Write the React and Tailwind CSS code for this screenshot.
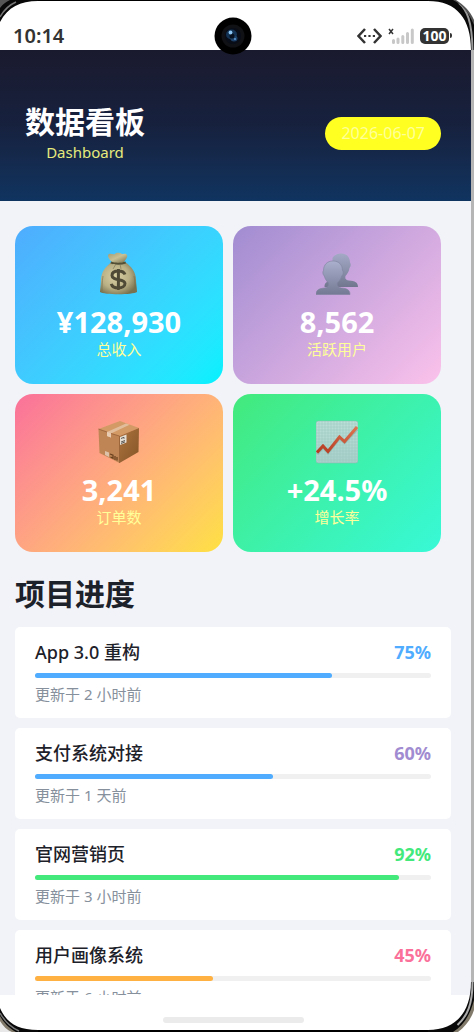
import React from "react";

const MoneyBag = () => (
  <svg viewBox="0 0 42 44" className="w-[42px] h-[44px]" aria-hidden="true">
    <defs>
      <radialGradient id="bag" cx="0.42" cy="0.45" r="0.62">
        <stop offset="0" stopColor="#d9d1a4" />
        <stop offset="0.6" stopColor="#b9b086" />
        <stop offset="1" stopColor="#79724f" />
      </radialGradient>
      <linearGradient id="bagTop" x1="0" y1="0" x2="1" y2="1">
        <stop offset="0" stopColor="#a39b72" />
        <stop offset="0.5" stopColor="#c9c195" />
        <stop offset="1" stopColor="#7c7554" />
      </linearGradient>
    </defs>
    <path d="M14 10C10 6 9 3 11 2c2-1 4 1 6 0 2-2 5-1 7 0 2 0 4-1 5 1 1 2-1 4-3 7z" fill="url(#bagTop)" />
    <path d="M14 10C8 14 3 20 3 28c0 5-1 9-1 12 4 3 33 3 37 0 0-4-1-8-1-12 0-8-5-14-11-18z" fill="url(#bag)" />
    <path d="M13 9.500c4 1.600 10 1.600 14.500 0l.5 2c-5 1.600-11 1.600-15.500 0z" fill="#545036" />
    <path d="M22 12l1 5M18 12l-3 5M5 24c-1 6-1 11-1 15M36 24c1 5 1 10 1 15" stroke="#777050" strokeWidth="1" fill="none" opacity="0.6" />
    <path
      d="M27 22.500c-1-2.600-3.500-3.500-6.500-3.500-4 0-6.500 1.600-6.500 4.400 0 6 13 2.600 13 8.200 0 2.800-3 4.400-6.500 4.400s-6.500-1.300-7.200-4.200M20.400 17v21"
      fill="none"
      stroke="#4f4a35"
      strokeWidth="3"
    />
  </svg>
);

const Users = () => (
  <svg viewBox="0 0 42 44" className="w-[42px] h-[44px]" aria-hidden="true">
    <defs>
      <linearGradient id="bust" x1="0" y1="0" x2="0" y2="1">
        <stop offset="0" stopColor="#aab0cd" />
        <stop offset="1" stopColor="#747993" />
      </linearGradient>
      <linearGradient id="bustBack" x1="0" y1="0" x2="0" y2="1">
        <stop offset="0" stopColor="#a4aac6" />
        <stop offset="1" stopColor="#72778f" />
      </linearGradient>
    </defs>
    <path
      d="M25 1.500c6 0 9 4 9 9 1 1 1 4-.5 5.500C33 20 31 22 29.500 24c-.7 3 .5 4 3.500 4.500 6 .5 9 2 9 6.500H8.500c0-4 2-6 8-7V6c2-3 5-4.500 8.500-4.500z"
      fill="url(#bustBack)"
    />
    <path
      d="M17 9c6 0 9.500 4 9.500 9.500 1.300 1.500.8 4-.7 5.500-.8 3-2.500 5-4.500 7-.5 3 1 4.500 4 5 6 .5 8.700 2 8.700 6.500H0C0 38 3 36.500 8.500 36c3-.5 4.500-2 4-5-2-2-3.500-4-4.200-7C6.800 22.500 6.300 20 7.500 18.500 7.500 13 11 9 17 9z"
      fill="url(#bust)"
      stroke="#7d829d"
      strokeWidth="0.6"
    />
  </svg>
);

const Package = () => (
  <svg viewBox="0 0 42 44" className="w-[42px] h-[44px]" aria-hidden="true">
    <defs>
      <linearGradient id="boxSide" x1="0" y1="0" x2="1" y2="1">
        <stop offset="0" stopColor="#ad743f" />
        <stop offset="1" stopColor="#855426" />
      </linearGradient>
    </defs>
    <path d="M.5 9L22 1l19 7-19.500 8z" fill="#d39a66" />
    <path d="M.5 9l21 7v27L1.500 33z" fill="#bf8554" />
    <path d="M21.500 16L41 8l-.5 24-19 11z" fill="url(#boxSide)" />
    <path d="M9 12L28 3.500l3.500 1.300L13 13.500v4l-4-1.500z" fill="#e2bd9c" />
    <path d="M9 12l4 1.500v4L9 16z" fill="#e8ccb4" />
    <path d="M.5 9l8.500 3M13 13.500l8.500 2.500v27" fill="none" stroke="#8c5a31" strokeWidth="0.7" />
    <path d="M22 17l6.500-2.500v8L22 25z" fill="#e5ded5" />
    <path d="M23 18.500l3-1.200v1.500M23 22l4-1.500M23 23.500l4-1.600" stroke="#5e5a56" strokeWidth="1" fill="none" />
    <path d="M7 31l4 1.500V37l-4-2z" fill="#ddc1a8" />
    <path d="M12 34l3 1.200v3L12.500 37M17 36v4M19 37v3.500" stroke="#68401d" strokeWidth="1.200" fill="none" />
  </svg>
);

const Chart = () => (
  <svg viewBox="0 0 42 44" className="w-[42px] h-[44px]" aria-hidden="true">
    <defs>
      <linearGradient id="sheet" x1="0" y1="0" x2="0" y2="1">
        <stop offset="0" stopColor="#bce0d8" />
        <stop offset="1" stopColor="#a9d0cb" />
      </linearGradient>
      <linearGradient id="trend" x1="0" y1="1" x2="1" y2="0">
        <stop offset="0" stopColor="#b53a20" />
        <stop offset="1" stopColor="#dc7550" />
      </linearGradient>
    </defs>
    <rect x="0" y="1" width="42" height="42" rx="2.500" fill="url(#sheet)" stroke="#8fbab4" strokeWidth="0.600" />
    <path
      d="M3 1v42M6 1v42M9 1v42M12 1v42M15 1v42M18 1v42M21 1v42M24 1v42M27 1v42M30 1v42M33 1v42M36 1v42M39 1v42M0 4h42M0 7h42M0 10h42M0 13h42M0 16h42M0 19h42M0 22h42M0 25h42M0 28h42M0 31h42M0 34h42M0 37h42M0 40h42"
      stroke="#98c5be"
      strokeWidth="0.500"
    />
    <path d="M1 34l6-7 5 5.500L23.500 18l5 4.500L41 9" fill="none" stroke="#7ba39d" strokeWidth="3" opacity="0.5" />
    <path d="M1 32.500l6-6.500 5 5.500L23.500 17l5 4.500L41 7" fill="none" stroke="url(#trend)" strokeWidth="3" />
  </svg>
);

const stats = [
  { icon: MoneyBag, value: "¥128,930", label: "总收入", bg: "from-[#4facfe] to-[#00f2fe]" },
  { icon: Users, value: "8,562", label: "活跃用户", bg: "from-[#a18cd1] to-[#fbc2eb]" },
  { icon: Package, value: "3,241", label: "订单数", bg: "from-[#fa709a] to-[#fee140]" },
  { icon: Chart, value: "+24.5%", label: "增长率", bg: "from-[#43e97b] to-[#38f9d7]" },
];

const projects = [
  { name: "App 3.0 重构", percent: 75, updated: "更新于 2 小时前", text: "text-[#4facfe]", bar: "bg-[#4facfe]" },
  { name: "支付系统对接", percent: 60, updated: "更新于 1 天前", text: "text-[#a18cd1]", bar: "bg-[#4facfe]" },
  { name: "官网营销页", percent: 92, updated: "更新于 3 小时前", text: "text-[#43e97b]", bar: "bg-[#43e97b]" },
  { name: "用户画像系统", percent: 45, updated: "更新于 6 小时前", text: "text-[#fa709a]", bar: "bg-[#ffb142]" },
];

const StatusBar = () => (
  <div className="h-[49px] shrink-0 bg-white flex items-center justify-between pl-[13px] pr-[19px] pt-5 text-[#333333]">
    <span className="text-[20px] leading-[20px] font-semibold">10:14</span>
    <div className="flex items-center gap-1.5">
      <svg viewBox="0 0 25 16" className="w-[25px] h-[16px]" fill="none" stroke="#333" aria-hidden="true">
        <path d="M8 1L1.500 8 8 15M17 1l6.500 7L17 15" strokeWidth="2.500" />
        <path d="M7 8h2.200M11.400 8h2.200M15.800 8H18" strokeWidth="2.200" />
      </svg>
      <svg viewBox="0 0 26 16" className="w-[26px] h-[16px]" fill="none" aria-hidden="true">
        <path d="M1 1l4 5M5 1L1 6" stroke="#333" strokeWidth="1.500" />
        <path d="M5.500 12.500v2M10 11v3.500M14.800 8.500v6M19.500 5.500v9M24.300 2v12.500" stroke="#c8c8c8" strokeWidth="3" strokeLinecap="round" />
      </svg>
      <div className="flex items-center gap-px">
        <span className="h-[16px] w-[29px] rounded-[5px] bg-[#333333] text-white text-[14px] leading-[16px] font-bold text-center">100</span>
        <span className="h-[5px] w-[2px] rounded-r-sm bg-[#333333]" />
      </div>
    </div>
  </div>
);

const Camera = () => (
  <svg viewBox="0 0 38 38" className="absolute top-[17px] left-1/2 -translate-x-1/2 -ml-1 w-[38px] h-[38px]" aria-hidden="true">
    <circle cx="19" cy="19" r="18.500" fill="#000" />
    <circle cx="19" cy="19" r="11.500" fill="#101114" />
    <circle cx="19" cy="19" r="8" fill="#080d18" />
    <ellipse cx="17.500" cy="17.500" rx="5.500" ry="5" fill="#143354" />
    <ellipse cx="20" cy="21.500" rx="3.500" ry="3" fill="#1d4168" />
    <circle cx="18" cy="19" r="2.500" fill="#07111f" />
    <circle cx="16.500" cy="15.500" r="1.900" fill="#8cc6f5" />
    <circle cx="21" cy="22" r="1.100" fill="#5e98ce" />
  </svg>
);

// rounded phone frame seen at the four corners
const FrameCorners = () => (
  <>
    <svg viewBox="0 0 40 40" className="absolute top-0 left-0 size-10" aria-hidden="true">
      <path d="M0 0h38v1C20 1 8 7 0 22z" fill="#080808" />
      <path d="M0 17C4 10 9 5 16 2" fill="none" stroke="#777" strokeWidth="1.500" />
      <path d="M0 8C3 4 6 2 10 0H0z" fill="#555" />
    </svg>
    <svg viewBox="0 0 50 50" className="absolute top-0 right-0 size-[50px]" aria-hidden="true">
      <path d="M4 0h46v50h-3C47 19 33 1 4 1z" fill="#080808" />
      <path d="M35 3c8 7 13 18 13.500 47" fill="none" stroke="#999" strokeWidth="2" />
      <path d="M29 0c10 5 16 13 21 25V0z" fill="#555" />
      <path d="M32 0c8 5 14 11 18 20V0z" fill="#fff" />
    </svg>
    <svg viewBox="0 0 40 40" className="absolute bottom-0 left-0 size-10" aria-hidden="true">
      <path d="M0 16c6 14 17 22 38 22v2H0z" fill="#080808" />
      <path d="M0 21c5 9 10 14 19 18" fill="none" stroke="#777" strokeWidth="1.500" />
      <path d="M0 24c4 7 9 12 16 16H0z" fill="#817969" />
      <path d="M0 29c3 5 7 9 12 11H0z" fill="#e8e8e8" />
    </svg>
    <svg viewBox="0 0 50 50" className="absolute bottom-0 right-0 size-[50px]" aria-hidden="true">
      <path d="M47 0h3v50H4v-2c27 0 43-17 43-48z" fill="#080808" />
      <path d="M48.500 0c0 22-5 34-15 43" fill="none" stroke="#aaa" strokeWidth="2" />
      <path d="M50 18c-4 15-10 25-21 32h21z" fill="#817969" />
      <path d="M50 28c-3 9-8 16-16 22h16z" fill="#fff" />
    </svg>
  </>
);

const StatCard = ({ icon: Icon, value, label, bg }) => (
  <div className={`flex flex-col items-center rounded-[18px] bg-linear-135 pt-[26px] pb-[26px] ${bg}`}>
    <Icon />
    <p className="mt-2 text-[29px] leading-[36px] font-bold text-white">{value}</p>
    <p className="text-[15px] leading-[18px] text-[#ffff99]">{label}</p>
  </div>
);

const ProjectCard = ({ name, percent, updated, text, bar }) => (
  <li className="rounded-[5px] bg-white px-5 pt-3 pb-3.5">
    <div className="flex items-center justify-between leading-[26px] text-[18px]">
      <h3 className="font-medium text-[#1d2129]">{name}</h3>
      <span className={`font-bold ${text}`}>{percent}%</span>
    </div>
    <div
      role="progressbar"
      aria-label={name}
      aria-valuenow={percent}
      aria-valuemin={0}
      aria-valuemax={100}
      className="mt-2 h-[5px] rounded-full bg-[#f0f0f0]"
    >
      <div className={`h-full rounded-full ${bar}`} style={{ width: `${percent}%` }} />
    </div>
    <p className="mt-1.5 text-[15px] leading-[20px] text-[#86909c]">{updated}</p>
  </li>
);

const App = () => {
  return (
    <div className="relative h-screen bg-black pt-px pb-0.5 font-['Noto_Sans','Noto_Sans_CJK_SC',sans-serif]">
      <div className="flex h-full flex-col overflow-hidden border-r-[3px] border-[#b5b5b5] bg-[#f1f3f8]">
        <StatusBar />

        <header className="shrink-0 flex items-center justify-between bg-linear-to-b from-[#1a1a2e] via-[#16213e] to-[#0f3460] pl-[25px] pr-[30px] pt-[52px] pb-[39px]">
          <div className="text-center">
            <h1 className="text-[30px] leading-[40px] font-bold text-white">数据看板</h1>
            <p className="text-[15px] leading-[20px] text-[#e6eb7c]">Dashboard</p>
          </div>
          <time className="mt-0.5 rounded-full bg-[#ffff22] px-4 text-[16px] leading-[33px] text-[#ffff99]">2026-06-07</time>
        </header>

        <main className="min-h-0 flex-1 overflow-y-auto [scrollbar-width:none] pt-[25px] pl-[15px]">
          <section className="grid grid-cols-2 gap-2.5 pr-[30px]">
            {stats.map((item) => (
              <StatCard key={item.label} {...item} />
            ))}
          </section>

          <section className="mt-5 pr-5">
            <h2 className="text-[30px] leading-[44px] font-bold text-[#1d2129]">项目进度</h2>
            <ul className="mt-[11px] flex flex-col gap-2.5">
              {projects.map((item) => (
                <ProjectCard key={item.name} {...item} />
              ))}
            </ul>
          </section>
        </main>

        {/* Gesture bar */}
        <div className="h-[35px] shrink-0 bg-white flex justify-center pt-[22px] pr-1">
          <div className="h-[6px] w-[30%] rounded-full bg-[#ebebeb]" />
        </div>
      </div>

      <Camera />
      <FrameCorners />
    </div>
  );
};

export default App;
